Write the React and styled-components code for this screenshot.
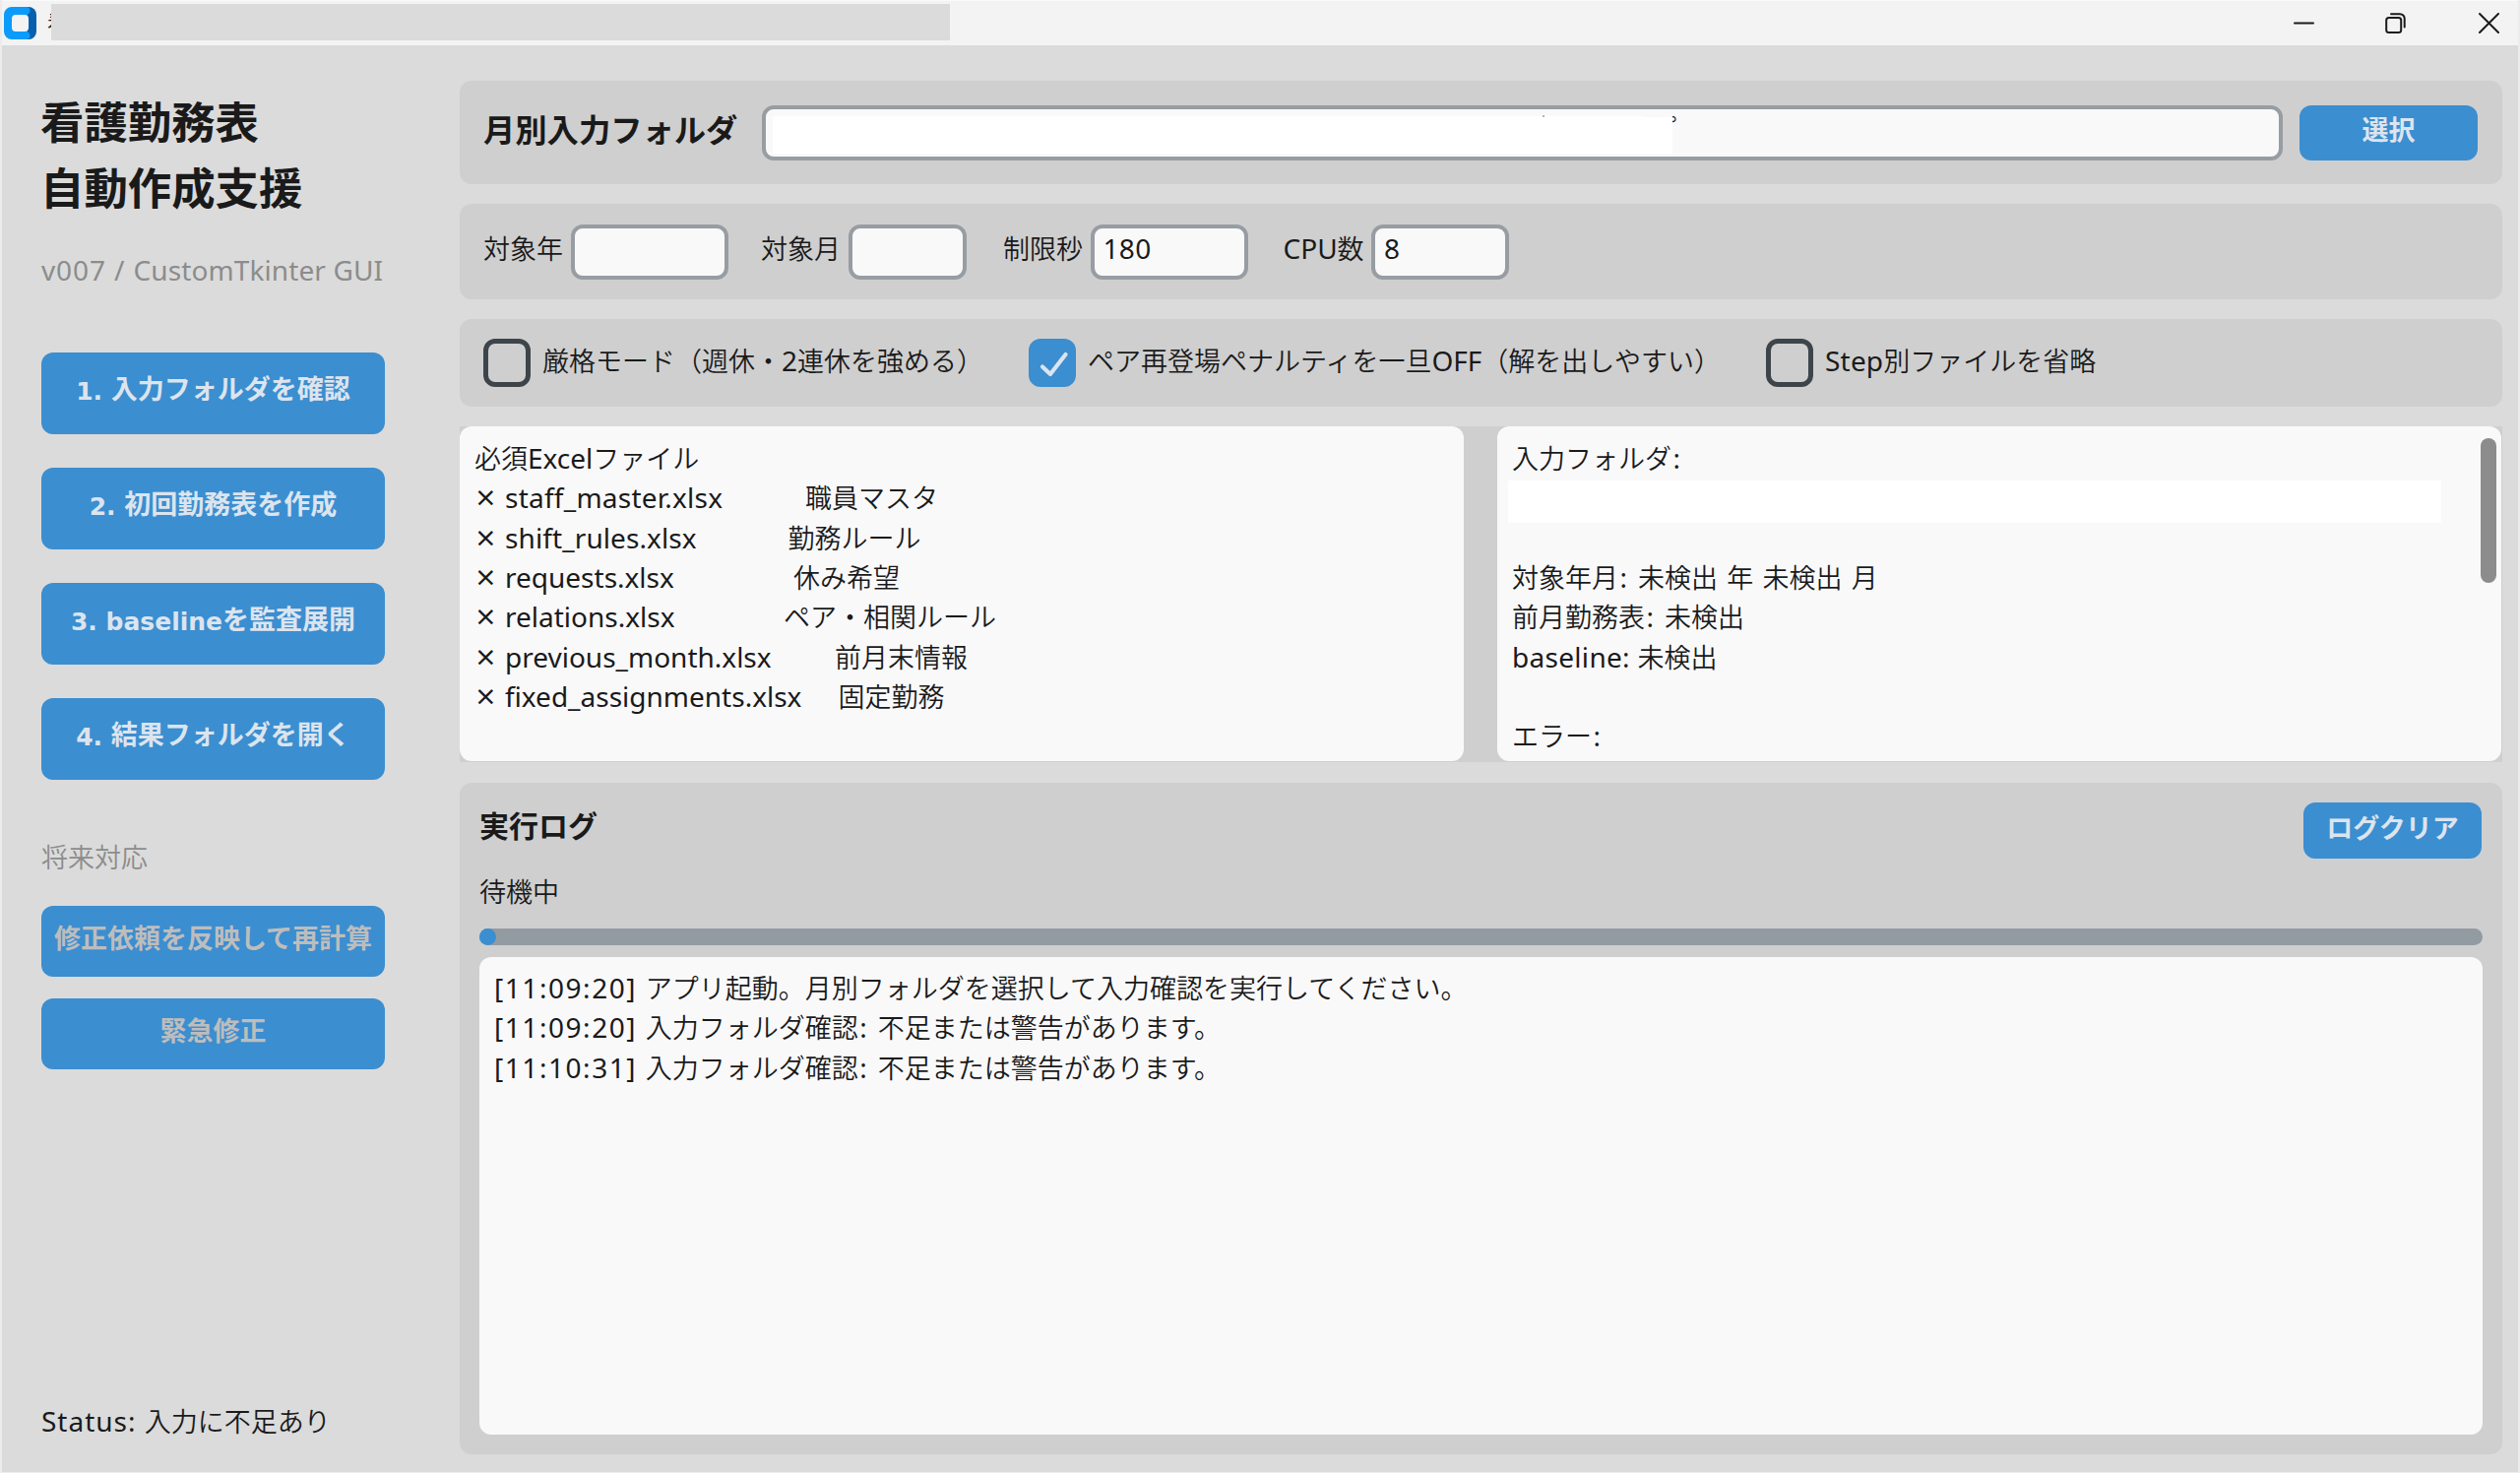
import React from "react";
import styled, { createGlobalStyle, css } from "styled-components";

const color = {
  window: "#dbdbdb",
  panel: "#cfcfcf",
  field: "#f9f9fa",
  border: "#979da2",
  accent: "#3b8ed0",
  onAccent: "#dce4ee",
  onAccentDisabled: "#bdbdbd",
  text: "#1a1a1a",
  muted: "#8c8c8c",
};

const GlobalStyle = createGlobalStyle`
  *, *::before, *::after { box-sizing: border-box; }
  body {
    margin: 0;
    background: #f3f3f3;
    color: ${color.text};
    font-family: "Noto Sans CJK JP", "Noto Sans", sans-serif;
    font-size: 27px;
    font-weight: 350;
    line-height: 40.3px;
  }
`;

const Window = styled.div`
  width: 2560px;
  height: 1496px;
  display: flex;
  flex-direction: column;
  border: solid #ececec;
  border-width: 0 2px 1px;
  overflow: hidden;
`;

/* ---------- title bar ---------- */

const TitleBar = styled.header`
  height: 46px;
  flex: none;
  display: flex;
  align-items: flex-start;
  background: #f3f3f3;
  border-top: 1px solid #fafafa;
`;

const AppIcon = styled.svg`
  width: 33px;
  height: 33px;
  margin: 6px 0 0 2px;
`;

const TitleText = styled.div`
  width: 24px;
  margin: 3px -20px 0 11px;
  height: 37px;
  font-size: 23px;
  line-height: 37px;
`;

const TitleCover = styled.div`
  position: relative;
  width: 913px;
  height: 37px;
  margin-top: 3px;
  background: #dbdbdb;
`;

const WindowControls = styled.div`
  margin: 12px 19px 0 auto;
  display: flex;
  gap: 72px;
  svg {
    display: block;
    width: 21px;
    height: 21px;
    fill: none;
    stroke: #1b1b1b;
    stroke-width: 2;
    stroke-linecap: round;
  }
  svg:last-child {
    margin-left: 2px;
  }
`;

/* ---------- text ---------- */

const Latin = styled.span`
  font-family: "Noto Sans", sans-serif;
  font-size: 28px;
  font-weight: 400;
  letter-spacing: ${(p) => p.$ls || 0}px;
  padding-left: ${(p) => p.$pl || 0}px;
  white-space: pre;
`;

const LatinBold = styled.span`
  font-family: "DejaVu Sans", sans-serif;
  font-size: 25px;
  vertical-align: -1px;
  white-space: pre;
`;

const Label = styled.span`
  white-space: nowrap;
`;

const Heading = styled.h2`
  margin: 0;
  font-size: ${(p) => p.$size}px;
  font-weight: 700;
  line-height: 40px;
  white-space: nowrap;
`;

/* ---------- layout ---------- */

const Body = styled.div`
  flex: 1;
  display: flex;
  background: ${color.window};
`;

const Sidebar = styled.aside`
  width: 465px;
  flex: none;
  padding: 44px 76px 32px 40px;
  display: flex;
  flex-direction: column;
`;

const AppTitle = styled.h1`
  margin: -1px 0 0 -1px;
  font-size: 44.4px;
  font-weight: 700;
  line-height: 66.7px;
  white-space: nowrap;
`;

const Version = styled.div`
  margin-top: 32px;
  line-height: 40px;
  color: ${color.muted};
`;

const Steps = styled.nav`
  margin-top: 63.6px;
  display: flex;
  flex-direction: column;
  gap: 34px;
`;

const Future = styled.section`
  margin-top: 58.4px;
  display: flex;
  flex-direction: column;
  gap: 22px;
`;

const FutureLabel = styled.div`
  line-height: 40px;
  margin-bottom: 8px;
  color: ${color.muted};
`;

const Status = styled.div`
  margin-top: auto;
  line-height: 40px;
`;

const Button = styled.button`
  width: ${(p) => p.$w || 349}px;
  height: ${(p) => p.$h}px;
  flex: none;
  padding: 0 0 ${(p) => (p.$h > 80 ? 7 : 8)}px;
  border: 0;
  border-radius: 12px;
  background: ${color.accent};
  color: ${color.onAccent};
  font: inherit;
  font-weight: 700;
  line-height: 40px;
  white-space: nowrap;
  &:disabled {
    color: ${color.onAccentDisabled};
  }
`;

const Main = styled.main`
  flex: 1;
  padding: 36px 16px 18px 0;
  display: flex;
  flex-direction: column;
`;

const Panel = styled.section`
  height: ${(p) => p.$h}px;
  flex: none;
  margin-bottom: 20px;
  padding: 0 25px 0 24px;
  display: flex;
  align-items: center;
  border-radius: 12px;
  background: ${color.panel};
`;

const Entry = styled.div`
  position: relative;
  width: ${(p) => (p.$w ? `${p.$w}px` : "auto")};
  ${(p) => !p.$w && css`flex: 1; margin-right: 17px;`}
  height: 56px;
  padding: 0 9px 6px;
  display: flex;
  align-items: center;
  border: 4px solid ${color.border};
  border-radius: 12px;
  background: ${color.field};
`;

const PathText = styled.span`
  position: absolute;
  left: 898px;
  top: -1px;
  line-height: 40px;
`;

const PathCover = styled.span`
  position: absolute;
  left: 7px;
  top: 7px;
  width: 914px;
  height: 38px;
  background: #fff;
`;

const PathTop = styled.span`
  position: absolute;
  left: 890px;
  top: 0;
  width: 30px;
  height: 8px;
  background: ${color.field};
`;

const Speck = styled.span`
  position: absolute;
  left: 789px;
  top: 6px;
  width: 2px;
  height: 2px;
  background: #b5b5a8;
`;

const Field = styled.label`
  display: flex;
  align-items: center;
  margin-right: ${(p) => p.$mr}px;
`;

const FieldLabel = styled.span`
  width: ${(p) => p.$w}px;
  padding-bottom: 6px;
  white-space: nowrap;
`;

const Check = styled.label`
  display: flex;
  align-items: center;
  width: ${(p) => p.$w}px;
  gap: 12px;
  white-space: nowrap;
`;

const CheckLabel = styled.div`
  padding-bottom: 5px;
`;

const CheckBox = styled.div`
  width: 48px;
  height: 49px;
  flex: none;
  border-radius: 12px;
  ${(p) =>
    p.$on
      ? css`background: ${color.accent};`
      : css`border: 5px solid #3e454a;`}
  svg {
    display: block;
    width: 48px;
    height: 49px;
    fill: none;
    stroke: ${color.onAccent};
    stroke-width: 4.2;
    stroke-linecap: round;
    stroke-linejoin: round;
  }
`;

const Overview = styled.div`
  height: 341px;
  flex: none;
  margin-bottom: 21px;
  padding: 0 1px 1px 0;
  display: flex;
  justify-content: space-between;
  background: ${color.panel};
`;

const TextBox = styled.div`
  position: relative;
  width: 1020px;
  padding: 12px 15px 0;
  border-radius: 12px;
  background: ${color.field};
`;

const Line = styled.div`
  height: 40.33px;
  line-height: 40.33px;
  white-space: pre;
`;

const FileRow = styled.div`
  display: flex;
  height: 40.33px;
  line-height: 40.33px;
  white-space: pre;
`;

const Mark = styled.span`
  width: 31px;
  font-family: "DejaVu Sans", sans-serif;
  font-weight: 400;
`;

const FileName = styled.span`
  width: ${(p) => p.$w}px;
`;

const PathRedaction = styled.div`
  width: 948px;
  height: 43px;
  margin: 3px 0 -5.7px -4px;
  background: #fff;
`;

const ScrollThumb = styled.div`
  position: absolute;
  right: 5px;
  top: 12px;
  width: 16px;
  height: 147px;
  border-radius: 8px;
  background: ${color.muted};
`;

const LogPanel = styled.section`
  flex: 1;
  padding: 20px 20px 20px;
  display: flex;
  flex-direction: column;
  border-radius: 12px;
  background: ${color.panel};
`;

const LogHeader = styled.div`
  display: flex;
  justify-content: space-between;
  align-items: flex-start;
  padding: 0 1px 0 0;
  height: 57px;
  h2 {
    margin-top: 2px;
  }
`;

const Waiting = styled.div`
  margin-top: 13px;
  height: 40px;
  line-height: 40px;
`;

const Progress = styled.div`
  height: 17px;
  margin-top: 18px;
  border-radius: 9px;
  background: #939ba2;
`;

const ProgressValue = styled.div`
  width: 17px;
  height: 17px;
  border-radius: 9px;
  background: ${color.accent};
`;

const LogBox = styled.div`
  flex: 1;
  margin-top: 12px;
  padding: 11px 15px;
  border-radius: 12px;
  background: ${color.field};
`;

const files = [
  ["staff_master.xlsx", "職員マスタ", 305, 0.25],
  ["shift_rules.xlsx", "勤務ルール", 287.5, 0.1],
  ["requests.xlsx", "休み希望", 293, 0],
  ["relations.xlsx", "ペア・相関ルール", 283, 0],
  ["previous_month.xlsx", "前月末情報", 335, 0],
  ["fixed_assignments.xlsx", "固定勤務", 338.5, 0],
];

const logs = [
  ["[11:09:20] ", "アプリ起動。月別フォルダを選択して入力確認を実行してください。"],
  ["[11:09:20] ", "入力フォルダ確認", "不足または警告があります。"],
  ["[11:10:31] ", "入力フォルダ確認", "不足または警告があります。"],
];

const Colon = () => <Latin $pl={1.5} $ls={1.8}>: </Latin>;

export default function App() {
  return (
    <>
      <GlobalStyle />
      <Window>
        <TitleBar>
          <AppIcon viewBox="0 0 33 33">
            <path d="M22 0h3a8 8 0 0 1 8 8v17a8 8 0 0 1-8 8h-3z" fill="#0860ad" />
            <path
              fillRule="evenodd"
              fill="#0a9bfb"
              d="M8 0h14.500a4 4 0 0 1 4 4a4 4 0 0 1-2.500 3.700v17.600a4 4 0 0 1 2.500 3.700a4 4 0 0 1-4 4H8a8 8 0 0 1-8-8V8a8 8 0 0 1 8-8z"
            />
            <rect x="8" y="8" width="17" height="17" rx="4" fill="#f3f3f3" />
          </AppIcon>
          <TitleText>看</TitleText>
          <TitleCover />
          <WindowControls>
            <svg viewBox="0 0 21 21"><path d="M1 10.500h19" /></svg>
            <svg viewBox="0 0 21 21">
              <rect x="1.200" y="5" width="15" height="15" rx="2.500" />
              <path d="M6 1.200h9a4.700 4.700 0 0 1 4.700 4.700v8.600" />
            </svg>
            <svg viewBox="0 0 21 21"><path d="M1 1l19 19M20 1L1 20" /></svg>
          </WindowControls>
        </TitleBar>

        <Body>
          <Sidebar>
            <AppTitle>看護勤務表<br />自動作成支援</AppTitle>
            <Version>
              <Latin $ls={0.9}>v007 / </Latin>
              <Latin $ls={0.1}>CustomTkinter GUI</Latin>
            </Version>
            <Steps>
              <Button $h={83}><LatinBold>1. </LatinBold>入力フォルダを確認</Button>
              <Button $h={83}><LatinBold>2. </LatinBold>初回勤務表を作成</Button>
              <Button $h={83}><LatinBold>3. baseline</LatinBold>を監査展開</Button>
              <Button $h={83}><LatinBold>4. </LatinBold>結果フォルダを開く</Button>
            </Steps>
            <Future>
              <FutureLabel>将来対応</FutureLabel>
              <Button $h={72} disabled>修正依頼を反映して再計算</Button>
              <Button $h={72} disabled>緊急修正</Button>
            </Future>
            <Status><Latin $ls={1}>Status: </Latin>入力に不足あり</Status>
          </Sidebar>

          <Main>
            <Panel $h={105}>
              <FieldLabel $w={283}>
                <Heading as="span" $size={32.3}>月別入力フォルダ</Heading>
              </FieldLabel>
              <Entry>
                <PathText>プ</PathText>
                <PathCover />
                <PathTop />
                <Speck />
              </Entry>
              <Button $w={181} $h={56}>選択</Button>
            </Panel>

            <Panel $h={97}>
              <Field $mr={33}>
                <FieldLabel $w={89}>対象年</FieldLabel>
                <Entry $w={160} />
              </Field>
              <Field $mr={37}>
                <FieldLabel $w={88.5}>対象月</FieldLabel>
                <Entry $w={120.5} />
              </Field>
              <Field $mr={36}>
                <FieldLabel $w={88.5}>制限秒</FieldLabel>
                <Entry $w={160}><Latin $ls={0.3}>180</Latin></Entry>
              </Field>
              <Field $mr={0}>
                <FieldLabel $w={89.5}><Latin>CPU</Latin>数</FieldLabel>
                <Entry $w={139.5}><Latin>8</Latin></Entry>
              </Field>
            </Panel>

            <Panel $h={89}>
              <Check $w={554}>
                <CheckBox />
                <CheckLabel>厳格モード（週休・<Latin>2</Latin>連休を強める）</CheckLabel>
              </Check>
              <Check $w={749}>
                <CheckBox $on>
                  <svg viewBox="0 0 48 49"><path d="M14 28.500l8 7.500L37.500 16" /></svg>
                </CheckBox>
                <CheckLabel>ペア再登場ペナルティを一旦<Latin>OFF</Latin>（解を出しやすい）</CheckLabel>
              </Check>
              <Check $w={400}>
                <CheckBox />
                <CheckLabel><Latin $ls={0.2}>Step</Latin>別ファイルを省略</CheckLabel>
              </Check>
            </Panel>

            <Overview>
              <TextBox>
                <Line>必須<Latin>Excel</Latin>ファイル</Line>
                {files.map(([name, desc, w, ls]) => (
                  <FileRow key={name}>
                    <Mark>×</Mark>
                    <FileName $w={w}><Latin $ls={ls}>{name}</Latin></FileName>
                    <Label>{desc}</Label>
                  </FileRow>
                ))}
              </TextBox>
              <TextBox>
                <Line>入力フォルダ<Colon /></Line>
                <PathRedaction />
                <Line />
                <Line>対象年月<Colon />未検出<Latin $ls={2}> </Latin>年<Latin $ls={2}> </Latin>未検出<Latin $ls={2}> </Latin>月</Line>
                <Line>前月勤務表<Colon />未検出</Line>
                <Line><Latin $ls={0.3}>baseline: </Latin>未検出</Line>
                <Line />
                <Line>エラー<Colon /></Line>
                <ScrollThumb />
              </TextBox>
            </Overview>

            <LogPanel>
              <LogHeader>
                <Heading $size={30}>実行ログ</Heading>
                <Button $w={181} $h={57}>ログクリア</Button>
              </LogHeader>
              <Waiting>待機中</Waiting>
              <Progress><ProgressValue /></Progress>
              <LogBox>
                {logs.map(([time, subject, detail], i) => (
                  <Line key={i}>
                    <Latin $ls={1.55}>{time}</Latin>
                    {subject}
                    {detail && <><Colon />{detail}</>}
                  </Line>
                ))}
              </LogBox>
            </LogPanel>
          </Main>
        </Body>
      </Window>
    </>
  );
}
